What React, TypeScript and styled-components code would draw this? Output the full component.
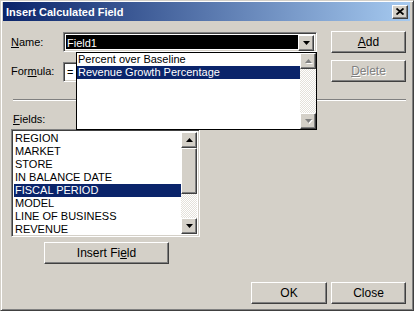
import React from "react";
import styled, { createGlobalStyle, css } from "styled-components";

const face = "#d4d0c8";
const shadow = "#808080";
const darkShadow = "#404040";
const highlight = "#0a246a";

const GlobalStyle = createGlobalStyle`
    html, body {
        margin: 0;
        padding: 0;
        background: ${face};
    }
    body {
        font-family: "Liberation Sans", Arial, sans-serif;
        font-size: 11px;
        color: #000;
    }
`;

const raised = css`
    border: 1px solid;
    border-color: #fff ${darkShadow} ${darkShadow} #fff;
    box-shadow: inset -1px -1px ${shadow}, inset 1px 1px ${face};
    background: ${face};
`;

const sunken = css`
    border: 1px solid;
    border-color: ${shadow} #fff #fff ${shadow};
    box-shadow: inset 1px 1px ${darkShadow}, inset -1px -1px ${face};
`;

const Window = styled.div`
    box-sizing: border-box;
    width: 414px;
    height: 311px;
    display: flex;
    flex-direction: column;
    background: ${face};
    border: 1px solid;
    border-color: ${face} ${darkShadow} ${darkShadow} ${face};
    box-shadow: inset 1px 1px #fff, inset -1px -1px ${shadow};
    padding: 1px 3px 3px 2px;
`;

const TitleBar = styled.div`
    height: 19px;
    flex: none;
    display: flex;
    align-items: center;
    padding: 0 2px 0 3px;
    background: linear-gradient(to right, ${highlight}, #a6caf0);
`;

const Title = styled.span`
    flex: 1;
    color: #fff;
    font-weight: bold;
    font-size: 11px;
`;

const CloseBox = styled.div`
    ${raised};
    box-sizing: border-box;
    width: 16px;
    height: 14px;
    display: flex;
    align-items: center;
    justify-content: center;
`;

const Body = styled.div`
    flex: 1;
    display: flex;
    flex-direction: column;
    padding: 10px 4px 0 8px;
`;

const FormRow = styled.div<{ $top?: number }>`
    display: flex;
    align-items: center;
    margin-top: ${(p) => p.$top ?? 0}px;
`;

const Label = styled.label`
    width: 52px;
    flex: none;
`;

const FieldSlot = styled.div`
    position: relative;
    width: 254px;
    flex: none;
`;

const Combo = styled.div`
    ${sunken};
    box-sizing: border-box;
    height: 20px;
    display: flex;
    padding: 2px;
    background: #fff;
`;

const ComboText = styled.div`
    flex: 1;
    background: #000;
    color: #fff;
    padding-left: 1px;
    line-height: 16px;
`;

const TextBox = styled.div`
    ${sunken};
    box-sizing: border-box;
    height: 20px;
    margin-top: 2px;
    background: #fff;
    padding: 0 3px;
    line-height: 18px;
`;

const Button = styled.button<{ $width?: number; $disabled?: boolean }>`
    ${raised};
    box-sizing: border-box;
    width: ${(p) => p.$width ?? 75}px;
    height: 22px;
    padding: 0;
    font-family: inherit;
    font-size: 12px;
    color: ${(p) => (p.$disabled ? shadow : "#000")};
    text-shadow: ${(p) => (p.$disabled ? "1px 1px #fff" : "none")};
`;

const SideButton = styled(Button)`
    margin-left: auto;
`;

const Key = styled.span`
    text-decoration: underline;
`;

const Separator = styled.div`
    height: 0;
    margin: 17px 0 0 2px;
    border-top: 1px solid ${shadow};
    border-bottom: 1px solid #fff;
`;

const SectionLabel = styled.div`
    margin-top: 12px;
    line-height: 13px;
    padding-left: 2px;
`;

const ListBox = styled.div<{ $width: number; $height: number }>`
    ${sunken};
    box-sizing: border-box;
    width: ${(p) => p.$width}px;
    height: ${(p) => p.$height}px;
    background: #fff;
    display: flex;
    padding: 2px 2px 0;
    overflow: hidden;
`;

const FieldsBox = styled(ListBox)`
    margin-top: 3px;
`;

const Items = styled.div`
    flex: 1;
    overflow: hidden;
`;

const Item = styled.div<{ $selected?: boolean }>`
    height: 13px;
    line-height: 13px;
    padding-left: 1px;
    white-space: nowrap;
    background: ${(p) => (p.$selected ? highlight : "transparent")};
    color: ${(p) => (p.$selected ? "#fff" : "#000")};
`;

const Popup = styled.div`
    position: absolute;
    top: 20px;
    left: 13px;
    right: 0;
    height: 78px;
    box-sizing: border-box;
    border: 1px solid #000;
    background: #fff;
    display: flex;
    z-index: 2;
`;

const ScrollBar = styled.div<{ $bottom?: number }>`
    width: 16px;
    flex: none;
    display: flex;
    flex-direction: column;
    padding-bottom: ${(p) => p.$bottom ?? 0}px;
`;

const ArrowButton = styled.div`
    ${raised};
    box-sizing: border-box;
    width: 16px;
    height: 16px;
    flex: none;
    display: flex;
    align-items: center;
    justify-content: center;
`;

const Thumb = styled.div<{ $height: number }>`
    ${raised};
    box-sizing: border-box;
    height: ${(p) => p.$height}px;
    flex: none;
`;

const Track = styled.div`
    flex: 1;
    background-color: #f1efe9;
    background-image: repeating-conic-gradient(#fff 0 25%, #e4e1da 0 50%);
    background-size: 2px 2px;
`;

const InsertButton = styled(Button)`
    margin: 5px 0 0 33px;
`;

const Footer = styled.div`
    display: flex;
    justify-content: flex-end;
    gap: 4px;
    margin-top: 18px;
`;

const Arrow = ({ down, disabled }: { down?: boolean; disabled?: boolean }) => (
    <svg width="7" height="5" viewBox="0 0 7 5" style={{ overflow: "visible" }}>
        {disabled && <polygon points={down ? "1,1 8,1 4.5,5" : "1,5 8,5 4.5,1"} fill="#fff" />}
        <polygon points={down ? "0,0 7,0 3.5,4" : "0,4 7,4 3.5,0"} fill={disabled ? shadow : "#000"} />
    </svg>
);

const fields = [
    "REGION",
    "MARKET",
    "STORE",
    "IN BALANCE DATE",
    "FISCAL PERIOD",
    "MODEL",
    "LINE OF BUSINESS",
    "REVENUE",
];

export default function App() {
    return (
        <>
            <GlobalStyle />
            <Window>
                <TitleBar>
                    <Title>Insert Calculated Field</Title>
                    <CloseBox>
                        <svg width="8" height="7" viewBox="0 0 8 7">
                            <path d="M0.5 0.5 L7.5 6.5 M7.5 0.5 L0.5 6.5" stroke="#000" strokeWidth="1.8" />
                        </svg>
                    </CloseBox>
                </TitleBar>
                <Body>
                    <FormRow>
                        <Label>
                            <Key>N</Key>ame:
                        </Label>
                        <FieldSlot>
                            <Combo>
                                <ComboText>Field1</ComboText>
                                <ArrowButton>
                                    <Arrow down />
                                </ArrowButton>
                            </Combo>
                            <Popup>
                                <Items>
                                    <Item>Percent over Baseline</Item>
                                    <Item $selected>Revenue Growth Percentage</Item>
                                </Items>
                                <ScrollBar>
                                    <ArrowButton>
                                        <Arrow disabled />
                                    </ArrowButton>
                                    <Track />
                                    <ArrowButton>
                                        <Arrow down disabled />
                                    </ArrowButton>
                                </ScrollBar>
                            </Popup>
                        </FieldSlot>
                        <SideButton $width={75}>
                            <Key>A</Key>dd
                        </SideButton>
                    </FormRow>
                    <FormRow $top={7}>
                        <Label>
                            For<Key>m</Key>ula:
                        </Label>
                        <FieldSlot>
                            <TextBox>=</TextBox>
                        </FieldSlot>
                        <SideButton $width={75} $disabled>
                            <Key>D</Key>elete
                        </SideButton>
                    </FormRow>
                    <Separator />
                    <SectionLabel>
                        <Key>F</Key>ields:
                    </SectionLabel>
                    <FieldsBox $width={189} $height={108}>
                        <Items>
                            {fields.map((f) => (
                                <Item key={f} $selected={f === "FISCAL PERIOD"}>
                                    {f}
                                </Item>
                            ))}
                        </Items>
                        <ScrollBar $bottom={2}>
                            <ArrowButton>
                                <Arrow />
                            </ArrowButton>
                            <Thumb $height={46} />
                            <Track />
                            <ArrowButton>
                                <Arrow down />
                            </ArrowButton>
                        </ScrollBar>
                    </FieldsBox>
                    <InsertButton $width={125}>
                        Insert Fi<Key>e</Key>ld
                    </InsertButton>
                    <Footer>
                        <Button $width={76}>OK</Button>
                        <Button $width={75}>Close</Button>
                    </Footer>
                </Body>
            </Window>
        </>
    );
}
